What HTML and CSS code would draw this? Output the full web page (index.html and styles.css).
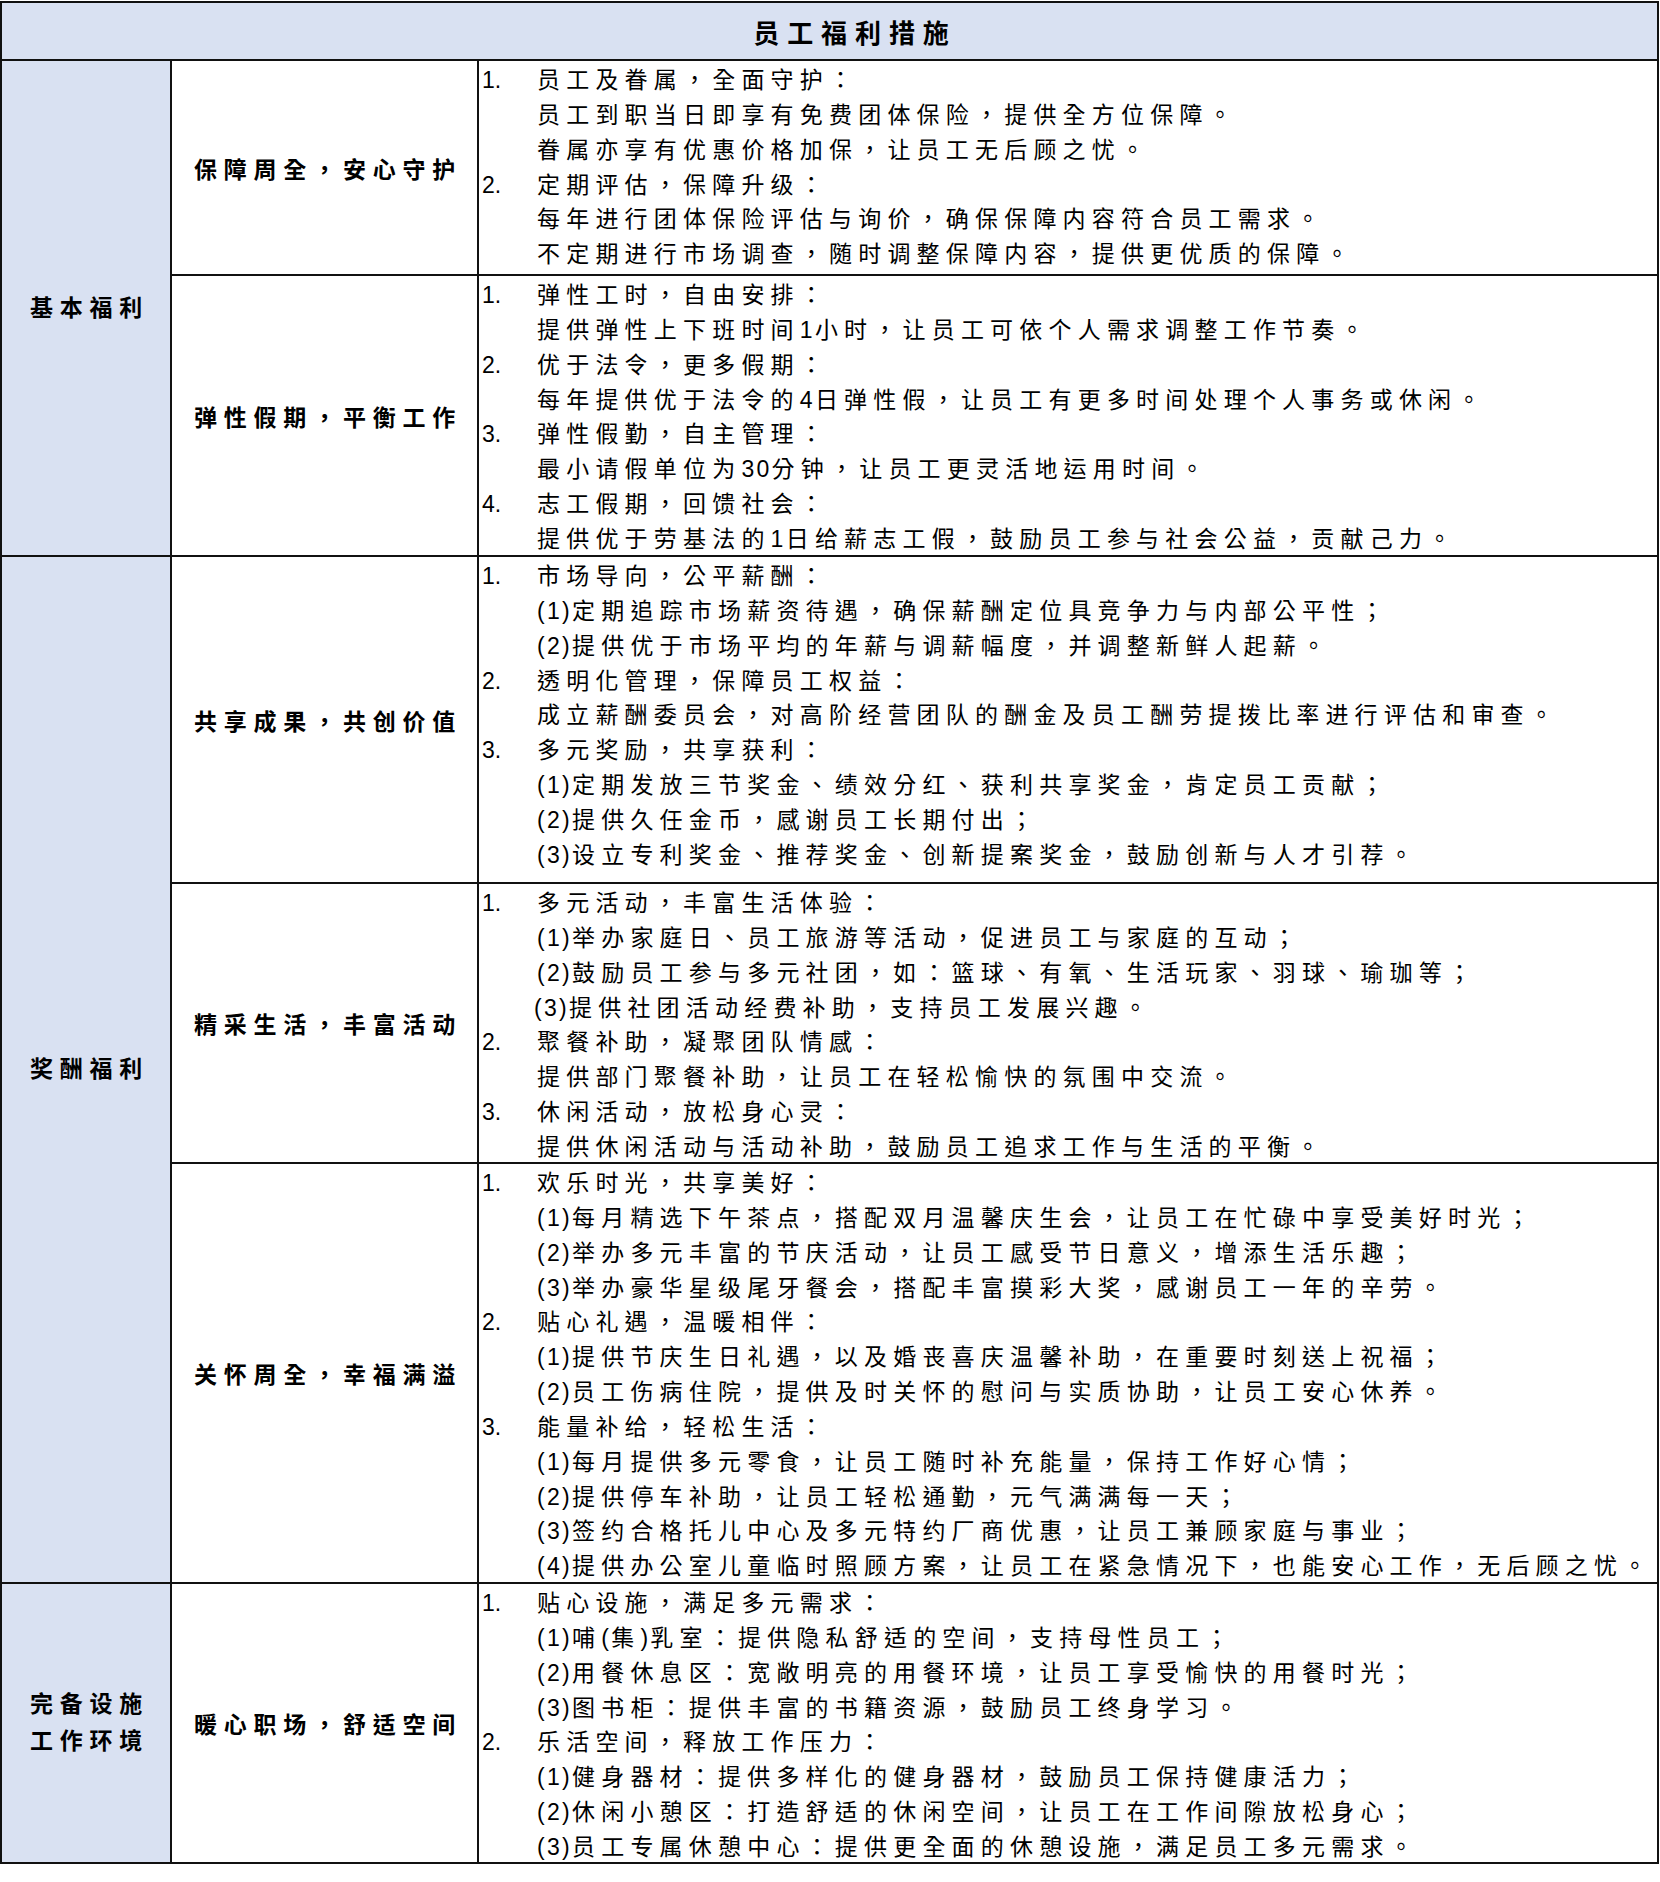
FILE: index.html
```html
<!DOCTYPE html>
<html lang="zh-TW">
<head>
<meta charset="utf-8">
<title>员工福利措施</title>
<link rel="stylesheet" href="styles.css">
</head>
<body>
<div class="sheet">
  <div class="title">员工福利措施</div>

  <div class="cat rows-ab">基本福利</div>
  <div class="sub">保障周全，安心守护</div>
  <div class="detail">
    <div class="item"><span class="num">1.</span><div class="lines">
      <div>员工及眷属，全面守护：</div>
      <div>员工到职当日即享有免费团体保险，提供全方位保障。</div>
      <div>眷属亦享有优惠价格加保，让员工无后顾之忧。</div>
    </div></div>
    <div class="item"><span class="num">2.</span><div class="lines">
      <div>定期评估，保障升级：</div>
      <div>每年进行团体保险评估与询价，确保保障内容符合员工需求。</div>
      <div>不定期进行市场调查，随时调整保障内容，提供更优质的保障。</div>
    </div></div>
  </div>

  <div class="sub">弹性假期，平衡工作</div>
  <div class="detail">
    <div class="item"><span class="num">1.</span><div class="lines">
      <div>弹性工时，自由安排：</div>
      <div>提供弹性上下班时间<span class="n">1</span>小时，让员工可依个人需求调整工作节奏。</div>
    </div></div>
    <div class="item"><span class="num">2.</span><div class="lines">
      <div>优于法令，更多假期：</div>
      <div>每年提供优于法令的<span class="n">4</span>日弹性假，让员工有更多时间处理个人事务或休闲。</div>
    </div></div>
    <div class="item"><span class="num">3.</span><div class="lines">
      <div>弹性假勤，自主管理：</div>
      <div>最小请假单位为<span class="n">30</span>分钟，让员工更灵活地运用时间。</div>
    </div></div>
    <div class="item"><span class="num">4.</span><div class="lines">
      <div>志工假期，回馈社会：</div>
      <div>提供优于劳基法的<span class="n">1</span>日给薪志工假，鼓励员工参与社会公益，贡献己力。</div>
    </div></div>
  </div>

  <div class="cat rows-cde">奖酬福利</div>
  <div class="sub">共享成果，共创价值</div>
  <div class="detail">
    <div class="item"><span class="num">1.</span><div class="lines">
      <div>市场导向，公平薪酬：</div>
      <div><span class="n">(1)</span>定期追踪市场薪资待遇，确保薪酬定位具竞争力与内部公平性；</div>
      <div><span class="n">(2)</span>提供优于市场平均的年薪与调薪幅度，并调整新鲜人起薪。</div>
    </div></div>
    <div class="item"><span class="num">2.</span><div class="lines">
      <div>透明化管理，保障员工权益：</div>
      <div>成立薪酬委员会，对高阶经营团队的酬金及员工酬劳提拨比率进行评估和审查。</div>
    </div></div>
    <div class="item"><span class="num">3.</span><div class="lines">
      <div>多元奖励，共享获利：</div>
      <div><span class="n">(1)</span>定期发放三节奖金、绩效分红、获利共享奖金，肯定员工贡献；</div>
      <div><span class="n">(2)</span>提供久任金币，感谢员工长期付出；</div>
      <div><span class="n">(3)</span>设立专利奖金、推荐奖金、创新提案奖金，鼓励创新与人才引荐。</div>
    </div></div>
  </div>

  <div class="sub">精采生活，丰富活动</div>
  <div class="detail">
    <div class="item"><span class="num">1.</span><div class="lines">
      <div>多元活动，丰富生活体验：</div>
      <div><span class="n">(1)</span>举办家庭日、员工旅游等活动，促进员工与家庭的互动；</div>
      <div><span class="n">(2)</span>鼓励员工参与多元社团，如：篮球、有氧、生活玩家、羽球、瑜珈等；</div>
      <div class="nudge"><span class="n">(3)</span>提供社团活动经费补助，支持员工发展兴趣。</div>
    </div></div>
    <div class="item"><span class="num">2.</span><div class="lines">
      <div>聚餐补助，凝聚团队情感：</div>
      <div>提供部门聚餐补助，让员工在轻松愉快的氛围中交流。</div>
    </div></div>
    <div class="item"><span class="num">3.</span><div class="lines">
      <div>休闲活动，放松身心灵：</div>
      <div>提供休闲活动与活动补助，鼓励员工追求工作与生活的平衡。</div>
    </div></div>
  </div>

  <div class="sub">关怀周全，幸福满溢</div>
  <div class="detail">
    <div class="item"><span class="num">1.</span><div class="lines">
      <div>欢乐时光，共享美好：</div>
      <div><span class="n">(1)</span>每月精选下午茶点，搭配双月温馨庆生会，让员工在忙碌中享受美好时光；</div>
      <div><span class="n">(2)</span>举办多元丰富的节庆活动，让员工感受节日意义，增添生活乐趣；</div>
      <div><span class="n">(3)</span>举办豪华星级尾牙餐会，搭配丰富摸彩大奖，感谢员工一年的辛劳。</div>
    </div></div>
    <div class="item"><span class="num">2.</span><div class="lines">
      <div>贴心礼遇，温暖相伴：</div>
      <div><span class="n">(1)</span>提供节庆生日礼遇，以及婚丧喜庆温馨补助，在重要时刻送上祝福；</div>
      <div><span class="n">(2)</span>员工伤病住院，提供及时关怀的慰问与实质协助，让员工安心休养。</div>
    </div></div>
    <div class="item"><span class="num">3.</span><div class="lines">
      <div>能量补给，轻松生活：</div>
      <div><span class="n">(1)</span>每月提供多元零食，让员工随时补充能量，保持工作好心情；</div>
      <div><span class="n">(2)</span>提供停车补助，让员工轻松通勤，元气满满每一天；</div>
      <div><span class="n">(3)</span>签约合格托儿中心及多元特约厂商优惠，让员工兼顾家庭与事业；</div>
      <div><span class="n">(4)</span>提供办公室儿童临时照顾方案，让员工在紧急情况下，也能安心工作，无后顾之忧。</div>
    </div></div>
  </div>

  <div class="cat">完备设施<br>工作环境</div>
  <div class="sub">暖心职场，舒适空间</div>
  <div class="detail">
    <div class="item"><span class="num">1.</span><div class="lines">
      <div>贴心设施，满足多元需求：</div>
      <div><span class="n">(1)</span>哺<span class="n">(</span>集<span class="n">)</span>乳室：提供隐私舒适的空间，支持母性员工；</div>
      <div><span class="n">(2)</span>用餐休息区：宽敞明亮的用餐环境，让员工享受愉快的用餐时光；</div>
      <div><span class="n">(3)</span>图书柜：提供丰富的书籍资源，鼓励员工终身学习。</div>
    </div></div>
    <div class="item"><span class="num">2.</span><div class="lines">
      <div>乐活空间，释放工作压力：</div>
      <div><span class="n">(1)</span>健身器材：提供多样化的健身器材，鼓励员工保持健康活力；</div>
      <div><span class="n">(2)</span>休闲小憩区：打造舒适的休闲空间，让员工在工作间隙放松身心；</div>
      <div><span class="n">(3)</span>员工专属休憩中心：提供更全面的休憩设施，满足员工多元需求。</div>
    </div></div>
  </div>
</div>
</body>
</html>
```

FILE: styles.css
```css
html, body {
  margin: 0;
  padding: 0;
  background: #ffffff;
}

body {
  padding-top: 1px;
  font-family: "Liberation Sans", "Noto Sans CJK TC", "Noto Sans CJK SC", sans-serif;
  color: #000000;
}

.sheet {
  width: 1659px;
  box-sizing: border-box;
  display: grid;
  grid-template-columns: 168px 305px 1178px;
  grid-template-rows: 56px 213px 279px 325px 278px 418px 278px;
  gap: 2px;
  padding: 2px;
  background: #111111;
}

.title {
  grid-column: 1 / 4;
  background: #d9e1f2;
  display: flex;
  align-items: center;
  justify-content: center;
  padding-left: 51px;
  font-size: 26px;
  font-weight: 700;
  letter-spacing: 7.9px;
}

.cat {
  background: #d9e1f2;
  display: flex;
  align-items: center;
  justify-content: center;
  text-align: center;
  padding-left: 7px;
  font-size: 23px;
  font-weight: 700;
  letter-spacing: 6.8px;
  line-height: 37px;
}

.rows-ab {
  grid-row: 2 / 4;
}

.rows-cde {
  grid-row: 4 / 7;
}

.sub {
  background: #ffffff;
  display: flex;
  align-items: center;
  justify-content: center;
  padding-left: 7px;
  font-size: 23px;
  font-weight: 700;
  letter-spacing: 6.8px;
  white-space: nowrap;
}

.detail {
  background: #ffffff;
  padding: 2px 0 0 3px;
  min-width: 0;
  font-size: 23px;
  line-height: 34.85px;
  letter-spacing: 6.2px;
  white-space: nowrap;
}

.item {
  display: grid;
  grid-template-columns: 55px auto;
}

.num {
  letter-spacing: 0;
  font-size: 23px;
}

.n {
  letter-spacing: 2.3px;
}

.nudge {
  margin-left: -3px;
}
```
